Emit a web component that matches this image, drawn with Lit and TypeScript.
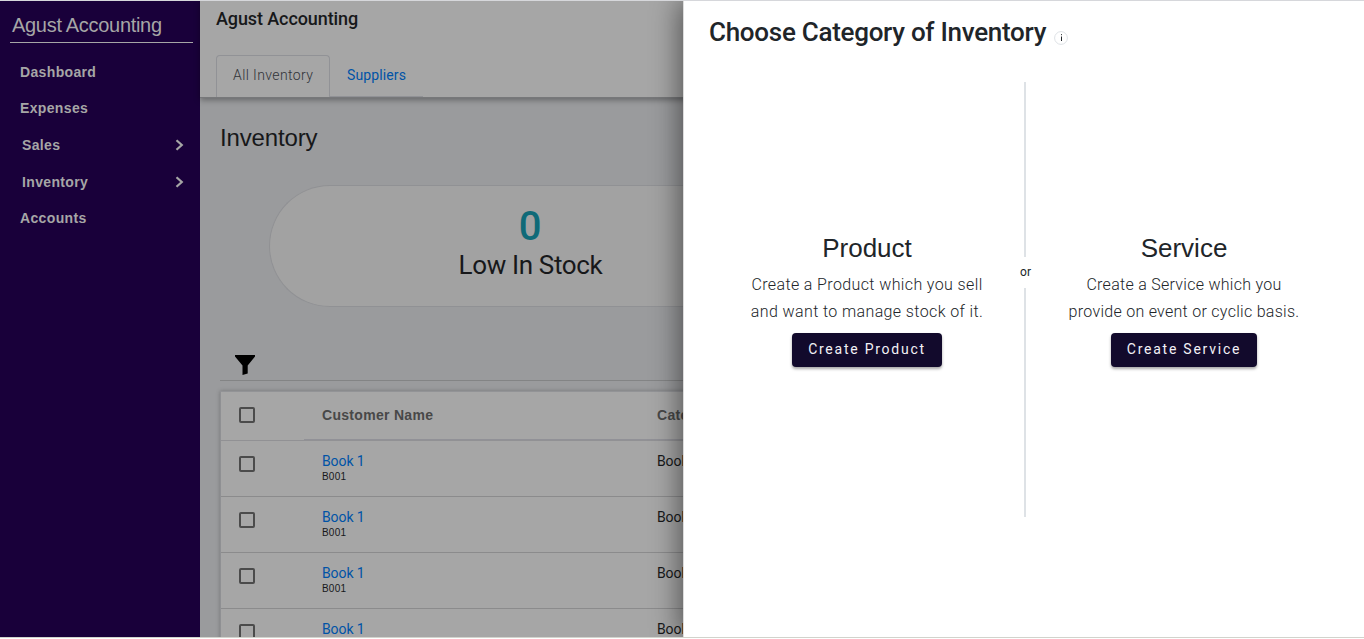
import { LitElement, html, css } from "lit";
import { customElement, property } from "lit/decorators.js";

@customElement("side-nav")
class SideNav extends LitElement {
  static styles = css`
    :host { display: flex; flex-direction: column; width: 200px; flex: none; background: #19003a; color: #a6a6a6; font-family: "Liberation Sans", Arial, sans-serif; }
    .brand { margin: 0 7px 0 10px; height: 42px; padding: 8px 0 0 2px; box-sizing: border-box; border-bottom: 1px solid #a6a6a6; font-size: 20px; line-height: 32px; letter-spacing: -0.3px; white-space: nowrap; }
    nav { padding-top: 11px; }
    .item { display: flex; align-items: center; justify-content: space-between; height: 36px; padding: 0 16px 0 20px; font-size: 14px; font-weight: 700; letter-spacing: 0.35px; }
    .item.group { height: 37px; padding-left: 22px; padding-top: 1px; box-sizing: border-box; }
    svg { width: 9px; height: 12px; }
  `;
  items = [["Dashboard", false], ["Expenses", false], ["Sales", true], ["Inventory", true], ["Accounts", false]] as [string, boolean][];
  render() {
    return html`<div class="brand">Agust Accounting</div>
      <nav>${this.items.map(([label, group]) => html`<div class="item ${group ? "group" : ""}"><span>${label}</span>
        ${group ? html`<svg viewBox="0 0 9 12"><path d="M1.5 1.2 6.8 6 1.5 10.8" fill="none" stroke="#a6a6a6" stroke-width="2.2" /></svg>` : ""}</div>`)}</nav>`;
  }
}

@customElement("inventory-table")
class InventoryTable extends LitElement {
  static styles = css`
    :host { display: block; background: #a6a6a6; box-shadow: 0 0 4px rgba(0, 0, 0, 0.25); border-left: 1px solid #8f9093; border-top: 1px solid #929396; font-size: 14px; font-family: "Liberation Sans", Arial, sans-serif; }
    .row { display: grid; grid-template-columns: 101px 335px 1fr; height: 56px; box-sizing: border-box; border-bottom: 1px solid #8b8b8c; }
    .head { height: 49px; border-bottom: 1px solid #919194; font-weight: 700; color: #484848; letter-spacing: 0.3px; line-height: 47px; background: linear-gradient(#919197, #919197) 83px 100% / 100% 1px no-repeat; }
    .box { width: 16px; height: 16px; box-sizing: border-box; border: 2px solid #4b4b4b; border-radius: 2px; margin: 15px 0 0 18px; }
    .name { font-family: Roboto, sans-serif; color: #0053a6; line-height: 18px; padding-top: 11px; letter-spacing: -0.1px; }
    .sku { font-family: "Liberation Sans", Arial, sans-serif; font-size: 10px; line-height: 14px; color: #17181a; letter-spacing: 0.2px; }
    .cat { font-family: Roboto, sans-serif; line-height: 18px; padding-top: 11px; color: #17181a; letter-spacing: -0.1px; }
  `;
  rows = ["B001", "B001", "B001", ""];
  render() {
    return html`<div class="row head"><div class="box"></div><span>Customer Name</span><span>Category</span></div>
      ${this.rows.map((sku) => html`<div class="row"><div class="box"></div>
        <div class="name">Book 1<div class="sku">${sku}</div></div><div class="cat">Book</div></div>`)}`;
  }
}

@customElement("category-choice")
class CategoryChoice extends LitElement {
  static styles = css`
    :host { display: flex; flex-direction: column; align-items: center; color: #212529; text-align: center; }
    .title { font: 400 26px/32px "Liberation Sans", Arial, sans-serif; }
    .text { margin-top: 7px; font-size: 16px; font-weight: 300; line-height: 27px; letter-spacing: 0.38px; white-space: nowrap; }
    :host([name="Service"]) .text { letter-spacing: 0.28px; }
    .line { display: block; }
    button { margin-top: 8px; height: 34px; padding: 0 16px 2px 16px; border: 0; border-radius: 4px; background: #120a2c; color: #f2f1f6; font: 400 14px/32px Roboto, sans-serif; letter-spacing: 1.75px; box-shadow: 0 2px 3px rgba(0, 0, 0, 0.35); white-space: nowrap; }
  `;
  @property() name = "";
  @property({ attribute: false }) lines: string[] = [];
  render() {
    return html`<div class="title">${this.name}</div>
      <div class="text">${this.lines.map((l) => html`<span class="line">${l}</span>`)}</div>
      <button>Create ${this.name}</button>`;
  }
}

@customElement("app-root")
class AppRoot extends LitElement {
  static styles = css`
    :host { display: flex; flex-direction: column; height: 639px; overflow: hidden; box-sizing: border-box; border-top: 1px solid #d6d7db; background: #fff; font-family: Roboto, sans-serif; position: relative; }
    .page { display: flex; height: 636px; overflow: hidden; }
    .foot { height: 1px; background: #d2d3cc; }
    main { flex: 1; min-width: 0; background: #9a9b9d; color: #17181a; display: flex; flex-direction: column; }
    header { flex: none; height: 97px; background: #a6a6a6; border-bottom: 1px solid #77787a; box-shadow: 0 2px 6px rgba(0, 0, 0, 0.35); padding-left: 16px; box-sizing: border-box; }
    .company { height: 54px; line-height: 36px; font-size: 18px; font-weight: 500; letter-spacing: -0.1px; }
    .tabs { display: flex; height: 42px; font-size: 14px; font-weight: 300; line-height: 40px; }
    .tab { box-sizing: border-box; width: 114px; padding-left: 16px; border: 1px solid #919296; border-bottom: 0; border-radius: 4px 4px 0 0; color: #303338; line-height: 39px; letter-spacing: 0.4px; }
    .link { width: 93px; box-sizing: border-box; padding-left: 17px; color: #0053a6; font-weight: 400; letter-spacing: 0.12px; border-bottom: 1px solid #919296; }
    .body { padding: 23px 0 0 20px; }
    h1 { margin: 0; font: 400 24px/34px "Liberation Sans", Arial, sans-serif; letter-spacing: -0.15px; }
    .pill { margin: 30px 0 0 49px; height: 122px; box-sizing: border-box; border: 1px solid #909194; border-right: 0; border-radius: 61px 0 0 61px; background: #a2a2a2; }
    .stat { width: 522px; text-align: center; padding-top: 21px; }
    .num { font-size: 40px; line-height: 40px; font-weight: 500; color: #0f6a78; margin-right: 2px; }
    .cap { font-size: 26px; line-height: 38px; font-weight: 400; letter-spacing: -0.35px; margin: -1px 1px 0 0; }
    .filter { height: 74px; box-sizing: border-box; border-bottom: 1px solid #838485; padding: 48px 0 0 15px; }
    .filter svg { display: block; width: 20px; height: 20px; }
    inventory-table { margin-top: 10px; }
    .drawer { position: absolute; top: 0; right: 0; width: 681px; height: 636px; box-sizing: border-box; border-left: 1px solid #dcdcdc; background: #fff; box-shadow: -4px 0 26px rgba(0, 0, 0, 0.48); clip-path: inset(0 0 0 -50px); color: #212529; }
    .heading { display: flex; height: 81px; padding: 13px 0 0 25px; box-sizing: border-box; font-size: 26px; line-height: 36px; font-weight: 500; letter-spacing: -0.28px; white-space: nowrap; }
    .info { width: 14px; height: 14px; margin: 17px 0 0 8px; }
    .choices { display: grid; grid-template-columns: 340px 2px 1fr; height: 435px; }
    .left, .right { padding-top: 150px; display: grid; justify-content: start; align-content: start; }
    .left { padding-left: 67px; grid-template-columns: 232px; }
    .right { padding-left: 43px; grid-template-columns: 230px; }
    .split { display: flex; flex-direction: column; align-items: center; }
    .bar { width: 2px; height: 175px; background: #dee2e6; }
    .bar.low { flex: 1; }
    .or { font-size: 12px; line-height: 31px; height: 31px; padding-left: 1px; }
  `;
  render() {
    return html`
      <div class="page">
        <side-nav></side-nav>
        <main>
          <header>
            <div class="company">Agust Accounting</div>
            <div class="tabs"><div class="tab">All Inventory</div><div class="link">Suppliers</div></div>
          </header>
          <div class="body">
            <h1>Inventory</h1>
            <div class="pill"><div class="stat"><div class="num">0</div><div class="cap">Low In Stock</div></div></div>
            <div class="filter"><svg viewBox="0 0 20 20"><path d="M0 0H20V1.5L12.7 10.5V18.5L7.5 20V10.5L0 1.5Z" fill="#000" /></svg></div>
            <inventory-table></inventory-table>
          </div>
        </main>
      </div>
      <div class="foot"></div>
      <section class="drawer">
        <div class="heading"><span>Choose Category of Inventory</span>
          <svg class="info" viewBox="0 0 14 14"><circle cx="7" cy="7" r="6.4" fill="#fff" stroke="#dee2e6" /><path d="M7.5 3.2V4.2M7.5 5.5V10" stroke="#212529" /></svg>
        </div>
        <div class="choices">
          <div class="left"><category-choice name="Product" .lines=${["Create a Product which you sell", "and want to manage stock of it."]}></category-choice></div>
          <div class="split"><div class="bar"></div><div class="or">or</div><div class="bar low"></div></div>
          <div class="right"><category-choice name="Service" .lines=${["Create a Service which you", "provide on event or cyclic basis."]}></category-choice></div>
        </div>
      </section>`;
  }
}
